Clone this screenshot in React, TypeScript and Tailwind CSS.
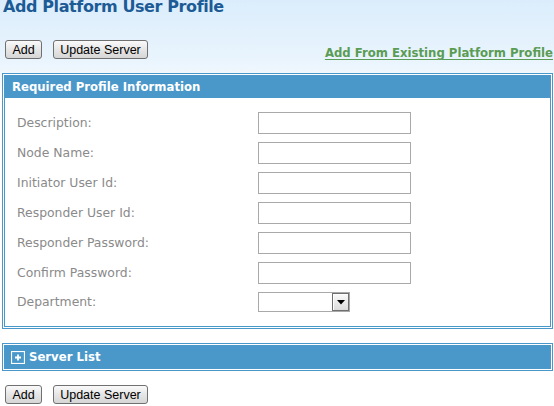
const FIELDS = [
  'Description:',
  'Node Name:',
  'Initiator User Id:',
  'Responder User Id:',
  'Responder Password:',
  'Confirm Password:',
]

function Btn({ label, w }: { label: string; w: string }) {
  return (
    <button
      type="button"
      className={`${w} h-[19px] rounded-[3px] border border-[#707070] bg-[linear-gradient(to_bottom,#fafafa,#e6e6e6_50%,#d6d6d6)] pt-[1px] text-center font-['Liberation_Sans',Arial,sans-serif] text-[12.5px] leading-[16px] text-black`}
    >
      {label}
    </button>
  )
}

function ButtonRow() {
  return (
    <div className="flex items-center gap-[11px] pl-[5px]">
      <Btn label="Add" w="w-[37px]" />
      <Btn label="Update Server" w="w-[95px]" />
    </div>
  )
}

function PlusBox() {
  return (
    <svg width="14" height="13" viewBox="0 0 14 13" className="shrink-0">
      <rect x="0.5" y="0.5" width="13" height="12" fill="#4a98c9" stroke="#ffffff" strokeWidth="1.2" />
      <path d="M7 3.5v6M4 6.5h6" stroke="#ffffff" strokeWidth="1.8" />
    </svg>
  )
}

export default function App() {
  return (
    <div className="min-h-screen bg-white font-['DejaVu_Sans',Verdana,sans-serif]">
      <div className="bg-[linear-gradient(to_bottom,#dbedfc_0px,#e9f4fd_60px,#ffffff_95px)]">
        <h1 className="pl-[3px] text-[16px] font-bold leading-[14px] tracking-[-0.4px] text-[#1c5b95]">
          Add Platform User Profile
        </h1>
        <div className="mt-[26px] flex items-end justify-between pr-[1px]">
          <ButtonRow />
          <a
            href="#"
            className="mb-[-1px] text-[11.7px] font-bold leading-[14px] text-[#5b9c54] underline decoration-1 underline-offset-2"
          >
            Add From Existing Platform Profile
          </a>
        </div>

        <div className="ml-[2px] mr-[1px] mt-[14px] border-[3px] border-double border-[#4a98c9] bg-white">
          <div className="h-[22px] bg-[#4a98c9] pl-[7px] text-[11.7px] font-bold leading-[22px] text-white">
            Required Profile Information
          </div>
          <div className="grid grid-cols-[241px_auto] gap-y-[8px] pb-[14px] pl-[12px] pt-[14px]">
            {FIELDS.map((f) => (
              <div key={f} className="contents">
                <div className="flex h-[22px] items-center text-[12.4px] text-[#8a8a8a]">{f}</div>
                <input
                  type="text"
                  className="h-[22px] w-[153px] border border-[#a9a9a9] bg-white outline-none"
                />
              </div>
            ))}
            <div className="flex h-[20px] items-center text-[12.4px] text-[#8a8a8a]">Department:</div>
            <div className="flex h-[20px] w-[92px] items-center justify-end border border-[#a9a9a9] bg-white pr-[0px]">
              <div className="flex h-[18px] w-[17px] items-center justify-center border border-[#6f6f6f] bg-[linear-gradient(to_bottom,#fbfbfb,#dcdcdc)] shadow-[inset_1px_1px_0_#ffffff]">
                <svg width="8" height="5" viewBox="0 0 8 5">
                  <path d="M0 0h8L4 4.5z" fill="#000000" />
                </svg>
              </div>
            </div>
          </div>
        </div>

        <div className="ml-[2px] mr-[1px] mt-[14px] border-[3px] border-double border-[#4a98c9]">
          <div className="flex h-[22px] items-center gap-[4px] bg-[#4a98c9] pl-[6px] text-[11.7px] font-bold leading-[22px] text-white">
            <PlusBox />
            <span>Server List</span>
          </div>
        </div>

        <div className="mt-[14px] pb-[2px]">
          <ButtonRow />
        </div>
      </div>
    </div>
  )
}
